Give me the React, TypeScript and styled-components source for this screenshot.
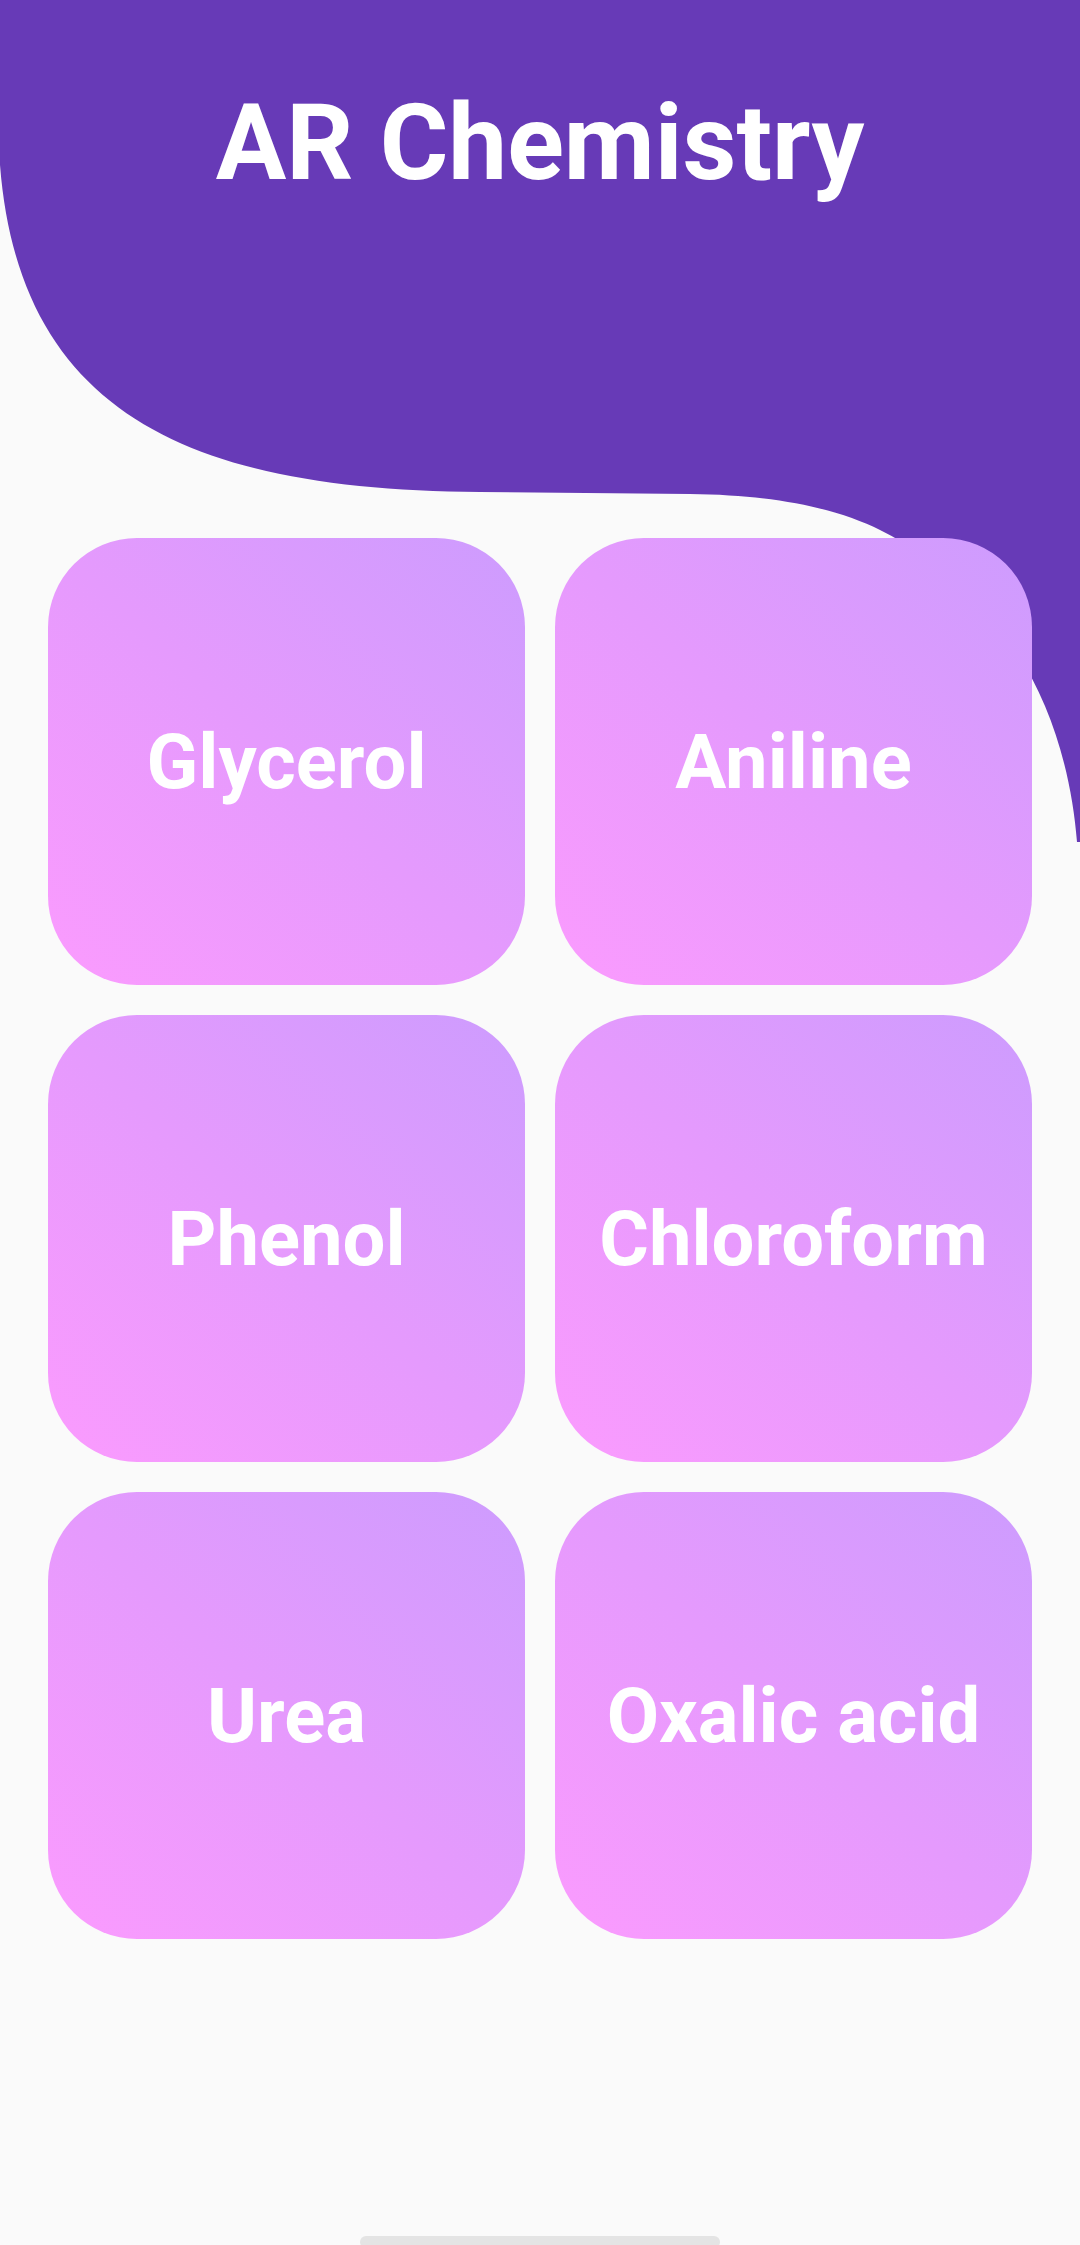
import React from 'react';
import styled, { createGlobalStyle } from 'styled-components';

const GlobalStyle = createGlobalStyle`
  html, body {
    margin: 0;
    padding: 0;
    background: #FAFAFA;
  }
  * {
    box-sizing: border-box;
  }
`;

const Root = styled.main`
  position: relative;
  height: 100vh;
  min-height: 2245px;
  overflow: hidden;
  background: #FAFAFA;
  display: flex;
  flex-direction: column;
  font-family: Roboto, "Noto Sans", Arial, sans-serif;
`;

const Blob = styled.svg`
  position: absolute;
  top: 0;
  left: 0;
  width: 1080px;
  height: 845px;
  z-index: 0;
`;

const Title = styled.h1`
  position: relative;
  z-index: 1;
  margin: 0;
  padding-top: 82px;
  text-align: center;
  color: #FFFFFF;
  font-size: 105px;
  line-height: 124px;
  font-weight: 700;
`;

const Grid = styled.section`
  position: relative;
  z-index: 1;
  margin-top: 332px;
  padding: 0 49px 0 48px;
  display: grid;
  grid-template-columns: repeat(2, 477px);
  grid-auto-rows: 447px;
  column-gap: 30px;
  row-gap: 30px;
`;

const Card = styled.button`
  border: 0;
  border-radius: 89px;
  background: linear-gradient(to top right, #FB9BFE 0%, #E59AFD 50%, #CD9CFE 100%);
  display: flex;
  align-items: center;
  justify-content: center;
  color: #FFFFFF;
  font-family: Roboto, "Noto Sans", Arial, sans-serif;
  font-size: 76px;
  font-weight: 700;
  padding: 0;
  cursor: pointer;
`;

const GestureBar = styled.div`
  margin: auto auto -3px;
  width: 360px;
  height: 12px;
  border-radius: 6px;
  background: #E4E4E4;
`;

const compounds = ['Glycerol', 'Aniline', 'Phenol', 'Chloroform', 'Urea', 'Oxalic acid'];

export default function App() {
  return (
    <Root>
      <GlobalStyle />
      <Blob viewBox="0 0 1080 845" aria-hidden="true">
        <path
          fill="#673AB7"
          d="M0,0 H1080 V842 H1077 C1068,730 1020,600 880,530 C840,510 780,495 690,494 L480,492 C200,490 20,420 0,165 Z"
        />
      </Blob>
      <Title>AR Chemistry</Title>
      <Grid>
        {compounds.map((name) => (
          <Card key={name}>{name}</Card>
        ))}
      </Grid>
      <GestureBar />
    </Root>
  );
}
